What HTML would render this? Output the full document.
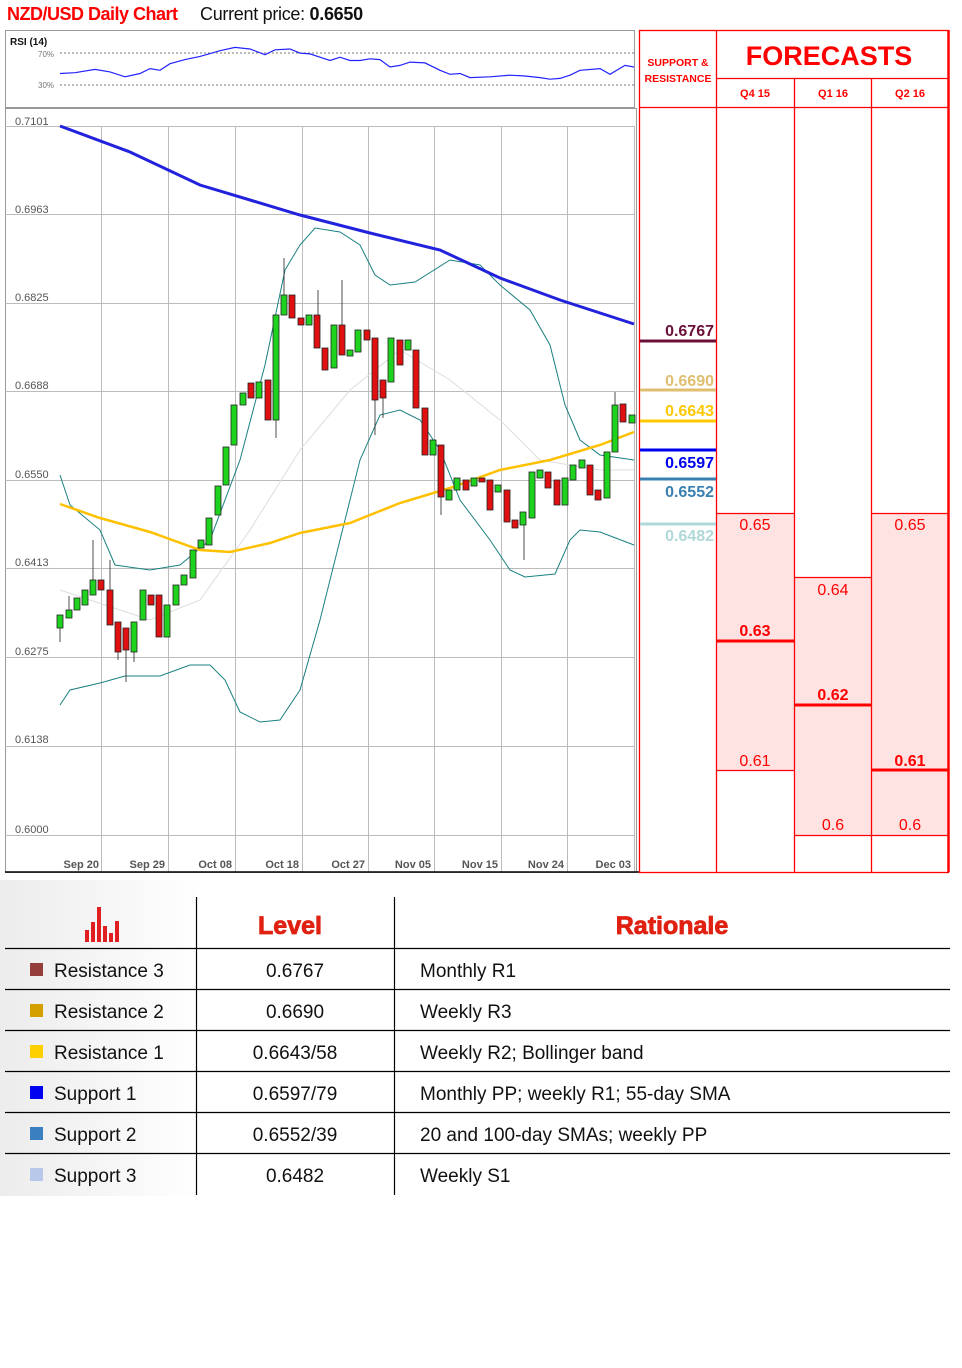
<!DOCTYPE html>
<html><head><meta charset="utf-8"><style>
body{margin:0;width:962px;height:1368px;background:#fff;font-family:"Liberation Sans",sans-serif;position:relative;overflow:hidden}
.a{position:absolute}
</style></head><body>
<div class="a" style="left:7px;top:4px;font-size:18px;font-weight:bold;color:#f00;letter-spacing:-0.5px">NZD/USD Daily Chart</div>
<div class="a" style="left:200px;top:4px;font-size:18px;color:#111;letter-spacing:-0.3px">Current price: <b>0.6650</b></div>
<svg class="a" style="left:0;top:0" width="962" height="1368" xmlns="http://www.w3.org/2000/svg" font-family="Liberation Sans, sans-serif">
<defs><linearGradient id="lg" x1="0" x2="1"><stop offset="0" stop-color="#ececec"/><stop offset="1" stop-color="#fff"/></linearGradient></defs>
<rect x="5.5" y="30.5" width="629" height="77" fill="#fff" stroke="#999"/>
<text x="10" y="45" font-size="10" font-weight="bold" fill="#111">RSI (14)</text>
<text x="38" y="57" font-size="8" fill="#777">70%</text>
<text x="38" y="88" font-size="8" fill="#777">30%</text>
<line x1="60" y1="53" x2="634" y2="53" stroke="#777" stroke-dasharray="2,2"/>
<line x1="60" y1="85" x2="634" y2="85" stroke="#777" stroke-dasharray="2,2"/>
<polyline fill="none" stroke="#22f" stroke-width="1.2" points="60,73.5 75,72.7 95,69.4 110,71.9 125,76.8 140,73.5 150,68.6 160,70.3 170,63.7 185,59.6 200,56.4 220,50.7 235,47.4 250,49 265,54.7 275,49.8 290,49 300,53.1 310,53.9 320,57.2 330,60.5 340,57.2 350,60.5 360,60.5 370,58.8 380,59.6 390,67 400,65.4 410,62.1 425,62.9 440,70.3 450,74.3 460,73.5 470,77.6 490,76.8 510,75.2 525,76 540,77.6 550,79.2 560,78.4 570,75.2 580,70.3 600,68.6 610,74.3 625,65.4 634,67"/>
<rect x="5.5" y="108.5" width="631" height="764" fill="#fff" stroke="#999"/>
<g stroke="#bbb" stroke-width="1">
<line x1="5" y1="126.5" x2="634" y2="126.5"/><line x1="5" y1="214.5" x2="634" y2="214.5"/><line x1="5" y1="303.5" x2="634" y2="303.5"/><line x1="5" y1="391.5" x2="634" y2="391.5"/><line x1="5" y1="480.5" x2="634" y2="480.5"/><line x1="5" y1="568.5" x2="634" y2="568.5"/><line x1="5" y1="657.5" x2="634" y2="657.5"/><line x1="5" y1="746.5" x2="634" y2="746.5"/><line x1="5" y1="835.5" x2="634" y2="835.5"/>
<line x1="101.5" y1="126" x2="101.5" y2="872"/><line x1="168.5" y1="126" x2="168.5" y2="872"/><line x1="235.5" y1="126" x2="235.5" y2="872"/><line x1="302.5" y1="126" x2="302.5" y2="872"/><line x1="368.5" y1="126" x2="368.5" y2="872"/><line x1="434.5" y1="126" x2="434.5" y2="872"/><line x1="501.5" y1="126" x2="501.5" y2="872"/><line x1="567.5" y1="126" x2="567.5" y2="872"/><line x1="634.5" y1="126" x2="634.5" y2="872"/>
</g>
<g font-size="11" fill="#555">
<text x="15" y="125">0.7101</text><text x="15" y="213">0.6963</text><text x="15" y="301">0.6825</text><text x="15" y="389">0.6688</text><text x="15" y="478">0.6550</text><text x="15" y="566">0.6413</text><text x="15" y="655">0.6275</text><text x="15" y="743">0.6138</text><text x="15" y="833">0.6000</text>
</g>
<g font-size="11" fill="#555" text-anchor="end" font-weight="bold">
<text x="99" y="868">Sep 20</text><text x="165" y="868">Sep 29</text><text x="232" y="868">Oct 08</text><text x="299" y="868">Oct 18</text><text x="365" y="868">Oct 27</text><text x="431" y="868">Nov 05</text><text x="498" y="868">Nov 15</text><text x="564" y="868">Nov 24</text><text x="631" y="868">Dec 03</text>
</g>
<line x1="5" y1="872" x2="640" y2="872" stroke="#000" stroke-width="1.5"/>
<polyline fill="none" stroke="#ddd" stroke-width="1" points="60,590 150,620 200,600 250,530 300,450 350,390 400,350 450,380 500,420 540,460 600,470 634,470"/>
<polyline fill="none" stroke="#1a8080" stroke-width="1" points="60,475 70,505 100,530 115,565 150,570 180,565 210,540 240,460 265,365 285,270 300,245 315,228 340,232 360,245 375,275 390,285 415,282 450,260 480,265 500,285 530,310 550,345 565,405 580,440 600,455 634,460"/>
<polyline fill="none" stroke="#1a8080" stroke-width="1" points="60,705 70,690 100,683 125,676 160,676 190,665 210,665 225,680 240,712 260,722 280,720 300,690 320,620 340,540 360,460 380,415 400,410 420,420 440,450 460,500 490,540 510,570 525,577 555,574 570,540 580,530 600,532 634,545"/>
<polyline fill="none" stroke="#ffc000" stroke-width="2.5" points="60,504 100,518 150,532 200,550 230,552 270,543 300,533 350,523 400,503 450,488 500,470 550,460 600,445 634,432"/>
<polyline fill="none" stroke="#2222dd" stroke-width="3" points="60,126 130,152 200,185 300,215 370,233 440,250 500,278 560,300 634,324"/>
<g stroke="#222" stroke-width="0.8">
<g fill="#1ed31e">
<rect x="57" y="615" width="6" height="13"/><rect x="66" y="610" width="6" height="8"/><rect x="74" y="598" width="6" height="12"/><rect x="82" y="590" width="6" height="15"/><rect x="90" y="580" width="6" height="15"/><rect x="131" y="622" width="6" height="30"/><rect x="140" y="590" width="6" height="30"/><rect x="164" y="605" width="6" height="32"/><rect x="173" y="585" width="6" height="20"/><rect x="181" y="575" width="6" height="10"/><rect x="190" y="550" width="6" height="28"/><rect x="198" y="540" width="6" height="8"/><rect x="206" y="518" width="6" height="27"/><rect x="215" y="486" width="6" height="29"/><rect x="223" y="447" width="6" height="38"/><rect x="231" y="405" width="6" height="40"/><rect x="240" y="393" width="6" height="12"/><rect x="256" y="382" width="6" height="16"/><rect x="273" y="315" width="6" height="105"/><rect x="281" y="295" width="6" height="20"/><rect x="306" y="315" width="6" height="10"/><rect x="331" y="325" width="6" height="43"/><rect x="347" y="350" width="6" height="6"/><rect x="355" y="330" width="6" height="22"/><rect x="388" y="338" width="6" height="44"/><rect x="405" y="340" width="6" height="10"/><rect x="430" y="440" width="6" height="15"/><rect x="446" y="490" width="6" height="10"/><rect x="454" y="478" width="6" height="12"/><rect x="471" y="478" width="6" height="8"/><rect x="495" y="485" width="6" height="7"/><rect x="520" y="512" width="6" height="13"/><rect x="529" y="472" width="6" height="46"/><rect x="537" y="470" width="6" height="8"/><rect x="562" y="478" width="6" height="27"/><rect x="570" y="465" width="6" height="15"/><rect x="579" y="460" width="6" height="8"/><rect x="604" y="452" width="6" height="46"/><rect x="612" y="405" width="6" height="47"/><rect x="629" y="415" width="6" height="8"/>
</g>
<g fill="#e01010">
<rect x="98" y="580" width="6" height="10"/><rect x="107" y="590" width="6" height="35"/><rect x="115" y="622" width="6" height="30"/><rect x="123" y="628" width="6" height="22"/><rect x="148" y="595" width="6" height="10"/><rect x="156" y="595" width="6" height="42"/><rect x="248" y="383" width="6" height="15"/><rect x="265" y="380" width="6" height="40"/><rect x="289" y="295" width="6" height="23"/><rect x="298" y="318" width="6" height="7"/><rect x="314" y="315" width="6" height="33"/><rect x="322" y="348" width="6" height="22"/><rect x="339" y="325" width="6" height="30"/><rect x="364" y="330" width="6" height="10"/><rect x="372" y="338" width="6" height="62"/><rect x="380" y="380" width="6" height="18"/><rect x="397" y="340" width="6" height="25"/><rect x="413" y="350" width="6" height="58"/><rect x="422" y="408" width="6" height="47"/><rect x="438" y="445" width="6" height="52"/><rect x="463" y="480" width="6" height="10"/><rect x="479" y="478" width="6" height="4"/><rect x="487" y="480" width="6" height="30"/><rect x="504" y="490" width="6" height="32"/><rect x="512" y="520" width="6" height="8"/><rect x="545" y="472" width="6" height="16"/><rect x="554" y="480" width="6" height="25"/><rect x="587" y="465" width="6" height="30"/><rect x="595" y="490" width="6" height="10"/><rect x="620" y="404" width="6" height="18"/>
</g>
</g>
<g stroke="#222" stroke-width="0.8">
<line x1="93" y1="540" x2="93" y2="580"/><line x1="118" y1="652" x2="118" y2="660"/><line x1="126" y1="650" x2="126" y2="682"/><line x1="134" y1="652" x2="134" y2="662"/><line x1="110" y1="560" x2="110" y2="590"/><line x1="284" y1="258" x2="284" y2="295"/><line x1="342" y1="280" x2="342" y2="325"/><line x1="375" y1="400" x2="375" y2="435"/><line x1="383" y1="398" x2="383" y2="418"/><line x1="524" y1="525" x2="524" y2="560"/><line x1="441" y1="497" x2="441" y2="515"/><line x1="615" y1="392" x2="615" y2="405"/><line x1="318" y1="290" x2="318" y2="315"/><line x1="276" y1="420" x2="276" y2="438"/><line x1="69" y1="596" x2="69" y2="610"/><line x1="60" y1="628" x2="60" y2="642"/>
</g>
<g fill="#ffe3e3">
<rect x="716" y="513" width="78" height="257"/><rect x="794" y="577" width="77" height="258"/><rect x="871" y="513" width="78" height="322"/>
</g>
<g stroke="#f00" stroke-width="1.3" fill="none">
<rect x="639.5" y="30.5" width="309" height="842"/>
<line x1="716.5" y1="30" x2="716.5" y2="872"/><line x1="794.5" y1="78" x2="794.5" y2="872"/><line x1="871.5" y1="78" x2="871.5" y2="872"/>
<line x1="716" y1="78.5" x2="949" y2="78.5"/><line x1="639" y1="107.5" x2="949" y2="107.5"/>
<line x1="716" y1="513.5" x2="794" y2="513.5"/><line x1="716" y1="770.5" x2="794" y2="770.5"/>
<line x1="794" y1="577.5" x2="871" y2="577.5"/><line x1="794" y1="835.5" x2="949" y2="835.5"/>
<line x1="871" y1="513.5" x2="949" y2="513.5"/>
</g>
<line x1="948.5" y1="30" x2="948.5" y2="872" stroke="#f00" stroke-width="2.5"/>
<g stroke="#f00" stroke-width="3">
<line x1="716" y1="641" x2="794" y2="641"/><line x1="794" y1="705" x2="871" y2="705"/><line x1="871" y1="770" x2="949" y2="770"/>
</g>
<text x="678" y="66" font-size="10.5" font-weight="bold" fill="#f00" text-anchor="middle">SUPPORT &amp;</text>
<text x="678" y="82" font-size="10.5" font-weight="bold" fill="#f00" text-anchor="middle">RESISTANCE</text>
<text x="829" y="65" font-size="27" font-weight="bold" fill="#f00" text-anchor="middle">FORECASTS</text>
<g font-size="11" font-weight="bold" fill="#f00" text-anchor="middle"><text x="755" y="97">Q4 15</text><text x="833" y="97">Q1 16</text><text x="910" y="97">Q2 16</text></g>
<g font-size="16" fill="#f00" text-anchor="middle">
<text x="755" y="530">0.65</text><text x="755" y="766">0.61</text><text x="833" y="595">0.64</text><text x="833" y="830">0.6</text><text x="910" y="530">0.65</text><text x="910" y="830">0.6</text>
<text x="755" y="636" font-weight="bold">0.63</text><text x="833" y="700" font-weight="bold">0.62</text><text x="910" y="766" font-weight="bold">0.61</text>
</g>
<g stroke-width="3"><line x1="640" y1="341" x2="716" y2="341" stroke="#6b1038"/><line x1="640" y1="390" x2="716" y2="390" stroke="#e0be70"/><line x1="640" y1="421" x2="716" y2="421" stroke="#ffc800"/><line x1="640" y1="450" x2="716" y2="450" stroke="#0000f0"/><line x1="640" y1="479" x2="716" y2="479" stroke="#3a80b0"/><line x1="640" y1="524" x2="716" y2="524" stroke="#b0d8d8"/></g>
<g font-size="16" font-weight="bold" text-anchor="end">
<text x="714" y="336" fill="#6b1038">0.6767</text><text x="714" y="386" fill="#e0be70">0.6690</text><text x="714" y="416" fill="#ffc800">0.6643</text><text x="714" y="468" fill="#0000f0">0.6597</text><text x="714" y="497" fill="#3a80b0">0.6552</text><text x="714" y="541" fill="#b0d8d8">0.6482</text>
</g>
<rect x="0" y="880" width="200" height="316" fill="url(#lg)"/>
<g fill="#e02020"><rect x="85" y="930" width="4" height="12"/><rect x="91" y="922" width="4" height="20"/><rect x="97" y="907" width="4" height="35"/><rect x="103" y="926" width="4" height="16"/><rect x="115" y="921" width="4" height="21"/><rect x="109" y="933" width="4" height="9"/></g>
<text x="290" y="934" font-size="25" font-weight="bold" fill="#e02010" text-anchor="middle" stroke="#e02010" stroke-width="0.8">Level</text>
<text x="672" y="934" font-size="25" font-weight="bold" fill="#e02010" text-anchor="middle" stroke="#e02010" stroke-width="0.8">Rationale</text>
<g stroke="#000" stroke-width="1.2">
<line x1="196.5" y1="897" x2="196.5" y2="1195"/><line x1="394.5" y1="897" x2="394.5" y2="1195"/>
<line x1="5" y1="948.5" x2="950" y2="948.5"/><line x1="5" y1="989.5" x2="950" y2="989.5"/><line x1="5" y1="1030.5" x2="950" y2="1030.5"/><line x1="5" y1="1071.5" x2="950" y2="1071.5"/><line x1="5" y1="1112.5" x2="950" y2="1112.5"/><line x1="5" y1="1153.5" x2="950" y2="1153.5"/>
</g>
<g><rect x="30" y="963" width="13" height="13" fill="#953c3c"/><rect x="30" y="1004" width="13" height="13" fill="#d4a000"/><rect x="30" y="1045" width="13" height="13" fill="#ffd000"/><rect x="30" y="1086" width="13" height="13" fill="#0000f0"/><rect x="30" y="1127" width="13" height="13" fill="#3a80c0"/><rect x="30" y="1168" width="13" height="13" fill="#b8c8e8"/></g>
<g font-size="19" fill="#111">
<text x="54" y="977">Resistance 3</text><text x="54" y="1018">Resistance 2</text><text x="54" y="1059">Resistance 1</text><text x="54" y="1100">Support 1</text><text x="54" y="1141">Support 2</text><text x="54" y="1182">Support 3</text>
<g text-anchor="middle"><text x="295" y="977">0.6767</text><text x="295" y="1018">0.6690</text><text x="295" y="1059">0.6643/58</text><text x="295" y="1100">0.6597/79</text><text x="295" y="1141">0.6552/39</text><text x="295" y="1182">0.6482</text></g>
<text x="420" y="977">Monthly R1</text><text x="420" y="1018">Weekly R3</text><text x="420" y="1059">Weekly R2; Bollinger band</text><text x="420" y="1100">Monthly PP; weekly R1; 55-day SMA</text><text x="420" y="1141">20 and 100-day SMAs; weekly PP</text><text x="420" y="1182">Weekly S1</text>
</g>
</svg>
</body></html>
